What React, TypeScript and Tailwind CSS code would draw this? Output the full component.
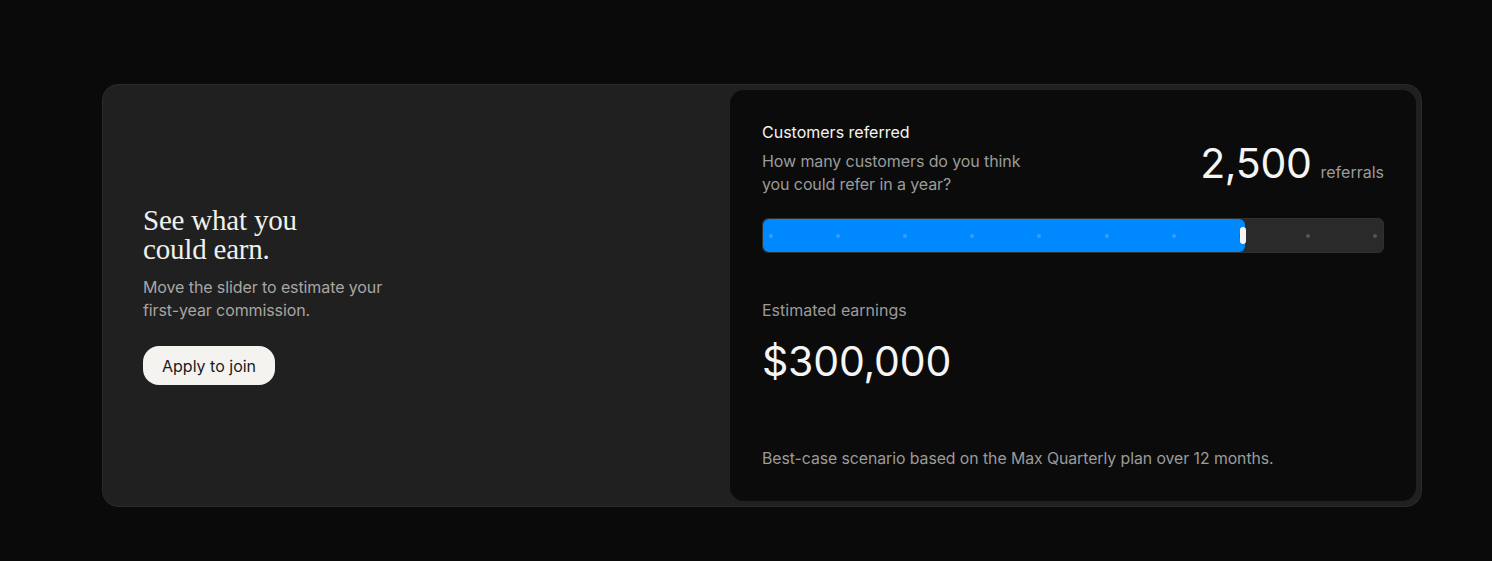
import React from "react";

const ticks = Array.from({ length: 10 });

export default function App() {
  const pct = 77.8;

  return (
    <div
      className="min-h-screen w-full bg-[#0a0a0a] flex items-start pl-[102px] pt-[84px]"
      style={{ fontFamily: "Inter, 'Liberation Sans', sans-serif" }}
    >
      <div className="w-[1320px] h-[423px] rounded-[16px] bg-[#202020] border border-[#2a2a2a] flex p-[5px]">
        {/* left */}
        <div className="flex-1 flex flex-col justify-center pl-[35px]">
          <h2
            className="text-[29px] leading-[29px] text-[#f2f0ea] tracking-[-0.2px]"
            style={{ fontFamily: "'Liberation Serif', 'DejaVu Serif', serif" }}
          >
            See what you
            <br />
            could earn.
          </h2>
          <p className="mt-[12px] text-[16px] leading-[23px] text-[#a8a6a2] max-w-[260px] tracking-[-0.1px]">
            Move the slider to estimate your first-year commission.
          </p>
          <div>
            <button className="mt-[24px] h-[39px] px-[19px] rounded-[16px] bg-[#f4f3f0] text-[#1a1a1a] text-[16px]">
              Apply to join
            </button>
          </div>
        </div>

        {/* right */}
        <div className="w-[686px] rounded-[14px] bg-[#0b0b0b] px-[32px] pt-[32px] pb-[32px] flex flex-col">
          <div className="flex justify-between items-start">
            <div>
              <div className="text-[16px] leading-[20px] text-[#f5f5f5]">Customers referred</div>
              <div className="mt-[8px] text-[16px] leading-[23px] text-[#9b9b9b] max-w-[270px] tracking-[-0.1px]">
                How many customers do you think you could refer in a year?
              </div>
            </div>
            <div className="flex items-baseline gap-[9px] mt-[19px]">
              <span className="text-[41px] leading-[44px] text-[#f5f5f5] tracking-[-0.3px]">2,500</span>
              <span className="text-[16px] text-[#9b9b9b]">referrals</span>
            </div>
          </div>

          <div className="mt-[22px] relative h-[35px] rounded-[6px] bg-[#2a2a2a] border border-[#303030] overflow-hidden">
            <div
              className="absolute left-0 top-0 bottom-0 bg-[#0088ff] rounded-[6px]"
              style={{ width: `${pct}%` }}
            />
            <div className="absolute inset-0 flex items-center justify-between px-[6px]">
              {ticks.map((_, i) => (
                <span
                  key={i}
                  className={
                    "w-[4px] h-[4px] rounded-full " +
                    (i < 7 ? "bg-[#3a9bff]" : "bg-[#555555]")
                  }
                />
              ))}
            </div>
            <div
              className="absolute top-[8px] w-[6px] h-[17px] rounded-[3px] bg-[#f4f4f4]"
              style={{ left: `calc(${pct}% - 5px)` }}
            />
          </div>

          <div className="mt-[46px] text-[16px] leading-[22px] text-[#9b9b9b]">Estimated earnings</div>
          <div className="mt-[16px] text-[41px] leading-[48px] text-[#f5f5f5] tracking-[-0.2px]">$300,000</div>

          <div className="mt-auto text-[15.8px] leading-[20px] text-[#9b9b9b] tracking-[-0.05px]">
            Best-case scenario based on the Max Quarterly plan over 12 months.
          </div>
        </div>
      </div>
    </div>
  );
}
